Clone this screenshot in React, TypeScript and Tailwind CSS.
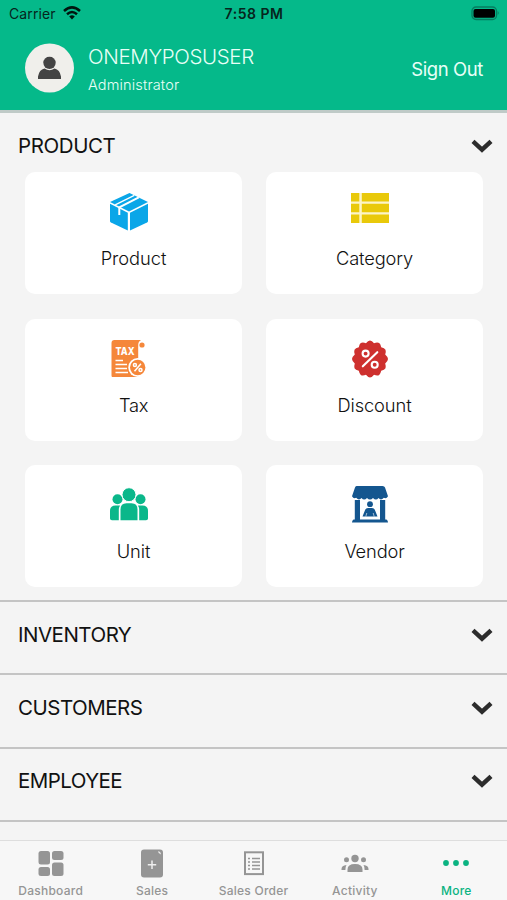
import type { ReactNode } from "react";

const ProductIcon = () => (
  <svg width="38" height="38" viewBox="0 0 38 38" fill="#0aa6e8">
    <path d="M19.5 0 38 9 19 18.5 0 9Z" />
    <path d="M0 10.800 17.800 19.800V37.500L1 29.600Q0 29.100 0 28Z" />
    <path d="M20 19.800 38 10.800V28Q38 29.100 37 29.600L20 37.500Z" />
    <path d="M9.300 22V14.300L28.800 4.400" fill="none" stroke="#fff" strokeWidth="2" />
    <path d="M5.200 11.800 24.300 2.300" fill="none" stroke="#fff" strokeWidth="1.300" />
  </svg>
);

const CategoryIcon = () => (
  <svg width="38" height="38" viewBox="0 0 38 38" fill="#e9c90a">
    <path d="M0 0H38V30H0Z" fill="#fcf5c8" />
    <path d="M0 0h8.300v8.600H0zM10.800 0H38v8.600H10.800zM0 10.800h8.300v8.400H0zM10.800 10.800H38v8.400H10.800zM0 21.400h8.300v8.600H0zM10.800 21.400H38v8.600H10.800z" />
  </svg>
);

const TaxIcon = () => (
  <svg width="38" height="38" viewBox="0 0 38 38">
    <path d="M4.500 0H31Q28.200 1.500 28.200 5V37H2.500Q1.500 37 1.500 35.500V3Q1.500 0 4.500 0Z" fill="#f5873a" />
    <circle cx="32" cy="5" r="2.600" fill="#f5873a" />
    <text x="5.500" y="15" fontSize="10.300" textLength="19" lengthAdjust="spacingAndGlyphs" fontWeight="800" fill="#fff" fontFamily="Inter, sans-serif">TAX</text>
    <path d="M5.500 20.500H13M5.500 24.500H17M5.500 28.500H17M5.500 32.500H18" stroke="#fff" strokeWidth="1.700" />
    <circle cx="27.700" cy="27.500" r="9.400" fill="#fff" />
    <circle cx="27.700" cy="27.500" r="7.700" fill="#f5873a" />
    <g fill="none" stroke="#fff" strokeWidth="1.500"><path d="m24.500 31.300 6.400-7.500" /><circle cx="24.900" cy="25" r="1.500" /><circle cx="30.500" cy="30" r="1.500" /></g>
  </svg>
);

const DiscountIcon = () => (
  <svg width="38" height="38" viewBox="0 0 38 38">
    <path d="M19 .5Q21 .5 23 3.200 26.500 1.800 28.200 3.100 29.600 4.200 30.200 7.200 33.500 7.900 34.500 9.700 35.200 11.400 34.200 14.500 37 17 37 19 37 21 34.200 23.500 35.200 26.600 34.500 28.300 33.500 30.100 30.200 30.800 29.600 33.800 28.200 34.900 26.500 36.200 23 34.800 21 37.500 19 37.500 17 37.500 15 34.800 11.500 36.200 9.800 34.900 8.400 33.800 7.800 30.800 4.500 30.100 3.500 28.300 2.800 26.600 3.800 23.500 1 21 1 19 1 17 3.800 14.500 2.800 11.400 3.500 9.700 4.500 7.900 7.800 7.200 8.400 4.200 9.800 3.100 11.500 1.800 15 3.200 17 .5 19 .5Z" fill="#ce302e" />
    <g fill="none" stroke="#fff" strokeWidth="2.100" strokeLinecap="round"><path d="M11.800 26.300 26.300 12.200" /><circle cx="14.600" cy="13.600" r="3" /><circle cx="23.700" cy="24.800" r="3" /></g>
  </svg>
);

const UnitIcon = () => (
  <svg width="38" height="38" viewBox="0 0 38 38" fill="#0ab78a">
    <circle cx="7.500" cy="13.200" r="5" /><circle cx="30.500" cy="13.200" r="5" />
    <path d="M0 32.500V25Q0 19.500 5.500 19.500H10Q8.800 21.500 8.800 24V34.200H2Q0 34.200 0 32.500ZM38 32.500V25Q38 19.500 32.500 19.500H28Q29.200 21.500 29.200 24V34.200H36Q38 34.200 38 32.500Z" />
    <circle cx="19" cy="8.700" r="7" stroke="#fff" strokeWidth="1" />
    <path d="M10.500 34.200V23.500Q10.500 17.300 16.500 17.300H21.500Q27.500 17.300 27.500 23.500V34.200Z" />
  </svg>
);

const VendorIcon = () => (
  <svg width="38" height="38" viewBox="0 0 38 38" fill="#14568f">
    <path d="M5.500 0H31.500Q33.500 0 34 1.500L37 10.200Q35.500 13 32.800 11.800 30 15 27.500 12 25 15 22 12 19 15 16 12 13 15 10.500 12 8 15 5.200 11.800 2.500 13 1 10.200L4 1.500Q4.400 0 5.500 0Z" />
    <path d="M3.800 14H9V34H3.800zM29 14H34.200V34H29zM2.500 33.500H10.500Q11.500 34.500 11.500 36.500H1Q1 34.500 2.500 33.500ZM27.500 33.500H35.500Q37 34.500 37 36.500H26.500ZM9 33.500H29V36.500H9Z" />
    <circle cx="19" cy="18.200" r="2.900" />
    <path d="M17 22H21Q23.500 22 24.300 25L26.500 30.500H11.500L13.700 25Q14.500 22 17 22Z" />
    <path d="m14.800 30.500 1-3.500M23.200 30.500l-1-3.500" stroke="#fff" strokeWidth=".6" />
  </svg>
);

const Chevron = () => (
  <svg width="22" height="14" viewBox="0 0 22 14" className="shrink-0">
    <path d="m2 2.400 9 8.300 9-8.300" fill="none" stroke="#2c2c2c" strokeWidth="4.400" />
  </svg>
);

function Card({ label, icon, spacing }: { label: string; icon: ReactNode; spacing: string }) {
  return (
    <div className="flex h-[122px] flex-col items-center rounded-[10px] bg-white pt-[21px]">
      <div className="mr-[9px] h-[38px]">{icon}</div>
      <span className={`mt-[15px] text-[18.300px] leading-6 font-light text-[#111] ${spacing}`}>{label}</span>
    </div>
  );
}

function Section({ label, spacing }: { label: string; spacing: string }) {
  return (
    <div className="flex h-[73.300px] shrink-0 items-start justify-between border-t-2 border-[#c4c4c4] pt-[18.800px] pr-[14px] pl-[18px]">
      <span className={`text-[20.500px] leading-[28px] ${spacing}`}>{label}</span>
      <div className="flex h-7 items-center"><Chevron /></div>
    </div>
  );
}

function Tab({ label, icon, active }: { label: string; icon: ReactNode; active?: boolean }) {
  return (
    <div className={`flex flex-1 flex-col items-center pt-[7px] ${active ? "text-[#0bb381]" : "text-[#959595]"}`}>
      <div className="h-8">{icon}</div>
      <span className="mt-[3px] text-[12px] leading-4 font-medium tracking-[0.250px] whitespace-nowrap">{label}</span>
    </div>
  );
}

export default function App() {
  return (
    <div className="flex h-[900px] w-[507px] flex-col overflow-hidden bg-[#f4f4f4] font-['Inter',sans-serif] text-[#111]">
      <header className="h-[110px] shrink-0 bg-[#05b98a]">
        <div className="grid h-7 grid-cols-3 items-center pr-[7px] pl-[9px] text-[14px] text-[#06251d]">
          <div className="flex items-center gap-[7px]">
            <span className="mt-[-1px] tracking-[0.100px]">Carrier</span>
            <svg className="mt-[-2px]" width="18" height="14" viewBox="0 0 18 14" fill="none" stroke="#00150f" strokeWidth="2.500">
              <path d="M1 5Q9-2.200 17 5M4 8.200Q9 3.800 14 8.200" /><path d="m6.200 10.400Q9 8.300 11.800 10.400L9 13.600Z" fill="#00150f" stroke="none" />
            </svg>
          </div>
          <span className="mt-[-1px] mr-[1px] text-center font-semibold tracking-[0.500px]">7:58 PM</span>
          <svg className="mt-[-2px] justify-self-end" width="29" height="15" viewBox="0 0 29 15">
            <rect x="1" y="1" width="24.500" height="12.500" rx="4" fill="none" stroke="#067d60" strokeWidth="1.300" />
            <rect x="2.500" y="3" width="21.500" height="8.800" rx="2" fill="#000" /><path d="M26.700 5Q28.700 7 26.700 9Z" fill="#067d60" />
          </svg>
        </div>
        <div className="flex items-start pt-[15px] pr-[24px] pl-[25px] text-[#e8fff7]">
          <div className="flex h-[49px] w-[49px] translate-y-[0.500px] items-center justify-center rounded-full bg-[#f0efeb]">
            <svg width="23" height="23" viewBox="0 0 23 23" fill="#444"><circle cx="11.500" cy="6.300" r="6.200" /><path d="M0 22.500V20Q1.200 13 6.500 12Q11.500 15.500 16.500 12Q21.800 13 23 20V22.500Z" /></svg>
          </div>
          <div className="ml-[14px] flex flex-col">
            <span className="text-[20.500px] leading-[27px] font-light tracking-[-0.350px]">ONEMYPOSUSER</span>
            <span className="mt-[5px] text-[14.500px] leading-5 font-light tracking-[0.150px]">Administrator</span>
          </div>
          <span className="mt-[13px] ml-auto text-[18.500px] leading-[27px] tracking-[-0.400px]">Sign Out</span>
        </div>
      </header>
      <main className="flex min-h-0 flex-1 flex-col overflow-hidden">
        <div className="h-[490px] shrink-0 border-t-[3px] border-[#bfcac7]">
          <div className="flex items-center justify-between pt-[19px] pr-[14px] pl-[18px]">
            <span className="text-[20.500px] leading-[28px] tracking-[-0.400px]">PRODUCT</span><Chevron />
          </div>
          <div className="mt-[12px] grid grid-cols-2 gap-x-6 gap-y-[24.500px] pr-[24px] pl-[25px]">
            <Card label="Product" icon={<ProductIcon />} spacing="tracking-[-0.050px]" />
            <Card label="Category" icon={<CategoryIcon />} spacing="tracking-[-0.150px]" />
            <Card label="Tax" icon={<TaxIcon />} spacing="tracking-[-0.300px]" />
            <Card label="Discount" icon={<DiscountIcon />} spacing="tracking-[-0.100px]" />
            <Card label="Unit" icon={<UnitIcon />} spacing="tracking-[-0.100px]" />
            <Card label="Vendor" icon={<VendorIcon />} spacing="tracking-[-0.150px]" />
          </div>
        </div>
        <Section label="INVENTORY" spacing="tracking-[-0.500px]" />
        <Section label="CUSTOMERS" spacing="tracking-[-0.500px]" />
        <Section label="EMPLOYEE" spacing="tracking-[-0.550px]" />
        <div className="h-5 shrink-0 border-t-2 border-[#c4c4c4]" />
      </main>
      <nav className="flex h-[60px] shrink-0 border-t border-[#dedede] bg-[#f7f7f7]">
        <Tab label="Dashboard" icon={
          <svg width="26" height="32" viewBox="0 0 26 32" fill="currentColor"><rect x=".5" y="3" width="11.500" height="13.500" rx="2.500" /><rect x="14" y="3" width="11.500" height="9" rx="2.500" /><rect x=".5" y="19" width="11.500" height="9" rx="2.500" /><rect x="14" y="14.500" width="11.500" height="13.500" rx="2.500" /></svg>
        } />
        <Tab label="Sales" icon={
          <svg width="22" height="32" viewBox="0 0 22 32"><rect x="0" y="1.500" width="22" height="28" rx="3" fill="currentColor" /><path d="M17 3.300Q19.500 3.300 20 6.500Q17.200 6 17 3.300Z" fill="#eee" /><path d="M11 12.500V21M6.800 16.800H15.200" stroke="#eee" strokeWidth="1.500" /></svg>
        } />
        <Tab label="Sales Order" icon={
          <svg width="20" height="32" viewBox="0 0 20 32" fill="none" stroke="currentColor"><rect x="1" y="4.300" width="18" height="21.800" strokeWidth="2" /><path d="M4 10.500H6M4 14H6M4 17.500H6M4 21H6M8 10.500H16M8 14H16M8 17.500H16M8 21H16" strokeWidth="1.600" /></svg>
        } />
        <Tab label="Activity" icon={
          <svg width="28" height="32" viewBox="0 0 28 32" fill="currentColor"><circle cx="14" cy="10.500" r="3.700" /><circle cx="5.500" cy="11.700" r="2.500" /><circle cx="22.500" cy="11.700" r="2.500" /><path d="M6.500 24V21.500Q6.500 16 14 16T21.500 21.500V24ZM.5 22V21Q.5 17.500 5.500 17Q4.200 19 4.400 22ZM27.500 22V21Q27.500 17.500 22.500 17Q23.800 19 23.600 22Z" /></svg>
        } />
        <Tab active label="More" icon={
          <svg width="28" height="32" viewBox="0 0 28 32" fill="currentColor"><circle cx="4" cy="15" r="2.900" /><circle cx="14" cy="15" r="2.900" /><circle cx="24" cy="15" r="2.900" /></svg>
        } />
      </nav>
    </div>
  );
}
